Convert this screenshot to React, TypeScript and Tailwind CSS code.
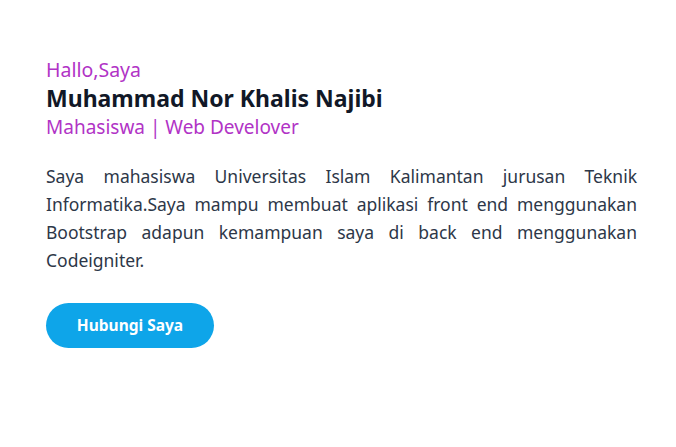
export default function App() {
  return (
    <div className="min-h-screen w-full bg-white" style={{ fontFamily: '"Noto Sans", "Open Sans", sans-serif' }}>
      <div className="px-[46px] pt-[56px]">
        <p className="text-[19.5px] leading-[27px] text-[#b133c6]">Hallo,Saya</p>
        <h1 className="text-[23px] leading-[30px] font-bold text-[#111827]">Muhammad Nor Khalis Najibi</h1>
        <p className="text-[19px] leading-[28px] text-[#b133c6]">Mahasiswa | Web Develover</p>
        <p className="mt-[21px] w-[591px] text-justify text-[17.5px] leading-[28px] text-[#2d3748]">
          Saya mahasiswa Universitas Islam Kalimantan jurusan Teknik Informatika.Saya mampu membuat aplikasi front end menggunakan Bootstrap adapun kemampuan saya di back end menggunakan Codeigniter.
        </p>
        <button className="mt-[29px] h-[45px] w-[168px] rounded-full bg-[#0ea5e9] text-[15.5px] font-bold text-white">
          Hubungi Saya
        </button>
      </div>
    </div>
  );
}
